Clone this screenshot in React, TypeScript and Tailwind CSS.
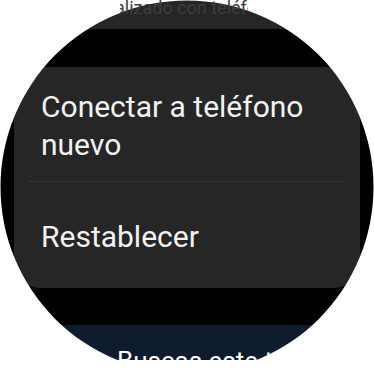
const rowText = "relative z-10 text-[30px] leading-[38px] text-[#f2f2f2]";

// white corners outside the round watch face
const FaceMask = () => (
    <svg
        className="pointer-events-none absolute left-0 top-0 z-[5]"
        width={374}
        height={374}
        viewBox="0 0 374 374"
    >
        <path
            fill="#ffffff"
            fillRule="evenodd"
            d="M0 0H374V374H0Z M187 0.5A186.5 186.5 0 1 0 187 373.5A186.5 186.5 0 1 0 187 0.5Z"
        />
    </svg>
);

const App = () => {
    return (
        <div className="w-[374px] h-[374px] bg-white" style={{ fontFamily: 'Roboto, "Noto Sans", sans-serif' }}>
            <div className="relative flex h-full w-full flex-col overflow-hidden bg-black">
                {/* previous item, scrolled mostly out of view */}
                <div className="flex h-[29px] shrink-0 justify-center bg-[#262626]">
                    <div className="relative z-10 -mt-[3px] ml-[-6px] w-[128px] overflow-hidden whitespace-nowrap text-[18px] leading-[22px] text-[#3e3e3e]">
                        <span className="ml-[-42px]">Actualizado con teléfono</span>
                    </div>
                </div>

                <div className="mx-[14px] mt-[38px] shrink-0 rounded-[26px] bg-[#262626]">
                    <div className="pl-[27px] pr-[20px] pt-[21px] pb-[17px]">
                        <div className={rowText}>Conectar a teléfono nuevo</div>
                    </div>
                    <div className="mx-[14px] h-px bg-[#353535]" />
                    <div className="pl-[27px] pr-[20px] pt-[36px] pb-[32px]">
                        <div className={rowText}>Restablecer</div>
                    </div>
                </div>

                <div className="mx-[14px] mt-[37px] h-[35px] shrink-0 rounded-t-[26px] bg-[#0f1c2d]">
                    <div className="relative z-10 whitespace-nowrap pl-[103px] pt-[23px] text-[26px] leading-[26px] text-white">
                        Buscas este teléfono?
                    </div>
                </div>
                <div className="flex-1 bg-white" />

                <FaceMask />
            </div>
        </div>
    );
};

export default App;
